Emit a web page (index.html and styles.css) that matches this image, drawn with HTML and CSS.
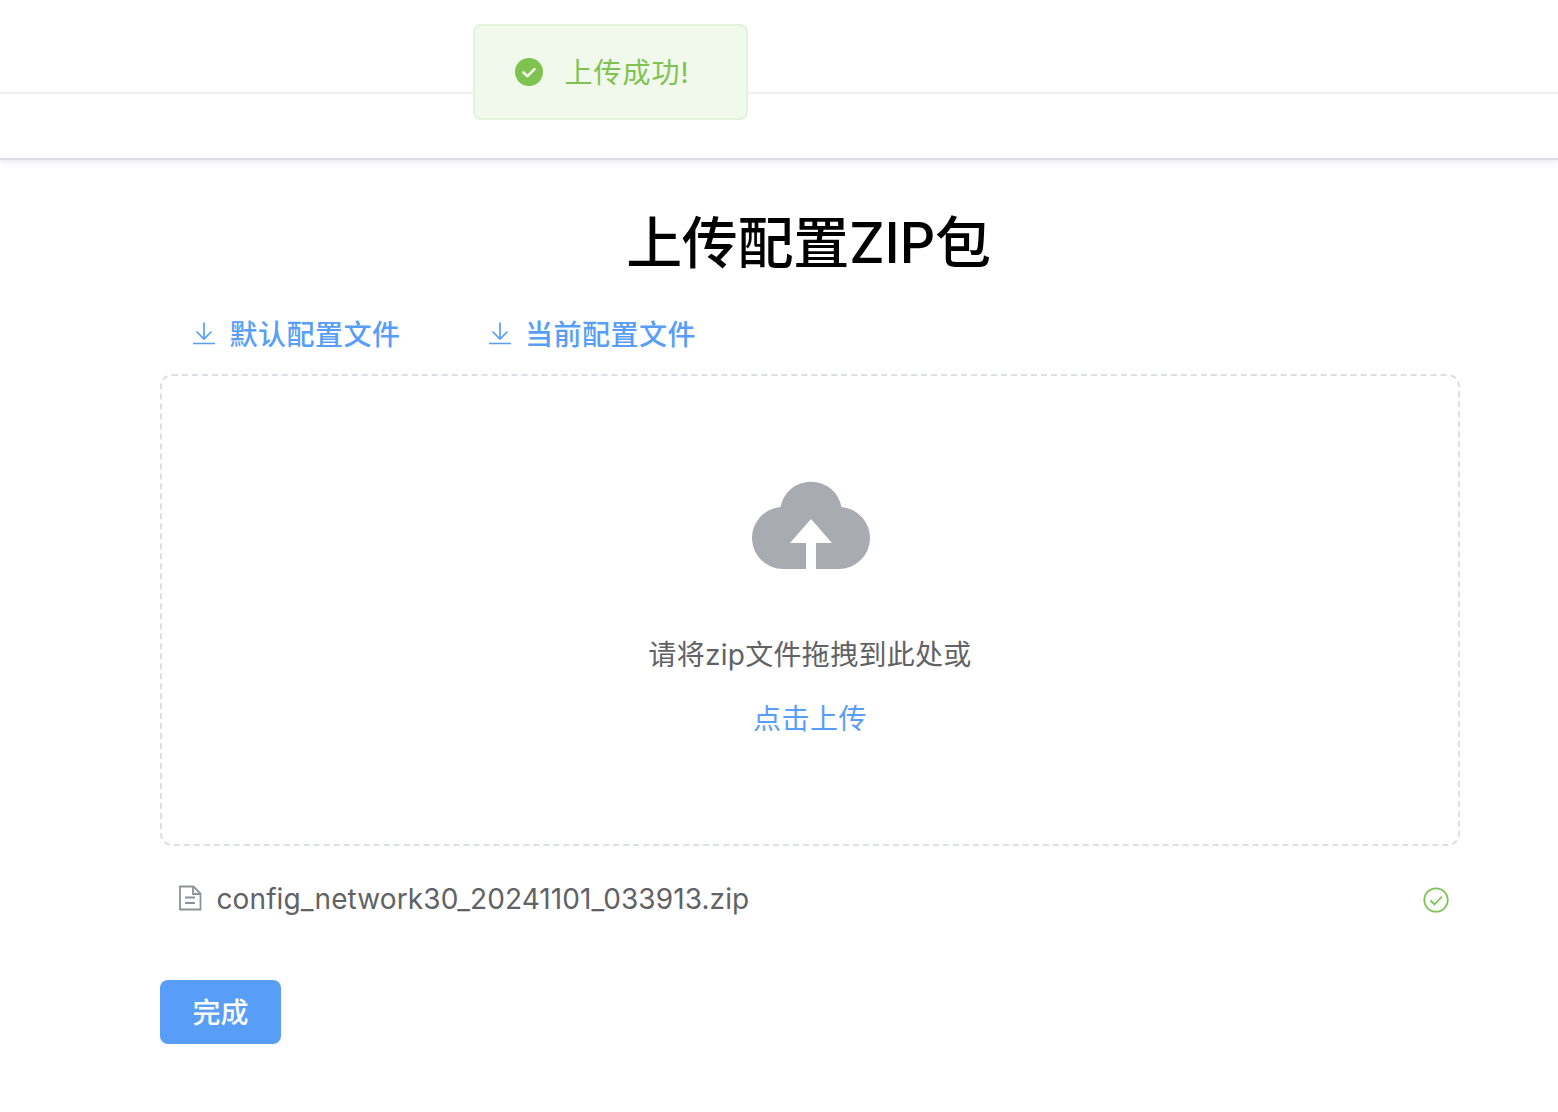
FILE: index.html
```html
<!DOCTYPE html>
<html lang="zh-CN">
<head>
<meta charset="utf-8">
<title>上传配置ZIP包</title>
<link rel="stylesheet" href="styles.css">
</head>
<body>
<div class="toast">
  <svg class="toast-icon" viewBox="0 0 30 30"><circle cx="15" cy="15" r="14" fill="#7fc250"/><path d="M9.5 15.5l4 3.7 7-7" fill="none" stroke="#f0f9eb" stroke-width="2.6" stroke-linecap="round" stroke-linejoin="round"/></svg>
  <span class="toast-text">上传成功!</span>
</div>
<header class="topbar"></header>
<div class="subbar"></div>
<main class="content">
  <h1 class="title">上传配置ZIP包</h1>
  <div class="links">
    <a class="link">
      <svg class="link-icon" viewBox="0 0 24 24"><path d="M1 22.500h22M12 1.500v16M4.500 10.500l7.500 7.500 7.500-7.500" fill="none" stroke="#589ef8" stroke-width="1.700"/></svg>
      <span class="link-text">默认配置文件</span>
    </a>
    <a class="link">
      <svg class="link-icon" viewBox="0 0 24 24"><path d="M1 22.500h22M12 1.500v16M4.500 10.500l7.500 7.500 7.500-7.500" fill="none" stroke="#589ef8" stroke-width="1.700"/></svg>
      <span class="link-text">当前配置文件</span>
    </a>
  </div>
  <section class="dropzone">
    <svg class="cloud" viewBox="0 0 118 90"><path d="M31 88A31 31 0 0 1 28.500 26.100A31 31 0 0 1 89.500 26.100A31 31 0 0 1 87 88H64V62H80L59 38L38 62H54V88Z" fill="#a8abb2"/></svg>
    <p class="hint">请将zip文件拖拽到此处或</p>
    <p class="click">点击上传</p>
  </section>
  <div class="file-row">
    <svg class="file-icon" viewBox="0 0 24 26"><path d="M2 1.500h13.500L22.500 8.500v16H2zM15 1.500v7.500h7.500M7 12.500h10M7 18h10" fill="none" stroke="#8f9299" stroke-width="1.800"/></svg>
    <span class="file-name">config_network30_20241101_033913.zip</span>
    <svg class="ok-icon" viewBox="0 0 26 26"><circle cx="13" cy="13" r="11.700" fill="none" stroke="#7fc250" stroke-width="1.800"/><path d="M7.500 13.500l4 4 7.500-8" fill="none" stroke="#7fc250" stroke-width="1.800"/></svg>
  </div>
  <button class="done" type="button">完成</button>
</main>
</body>
</html>
```
FILE: styles.css
```css
* { box-sizing: border-box; }
html, body { margin: 0; padding: 0; background: #fff; }
body {
  font-family: Inter, "Noto Sans CJK SC", sans-serif;
  width: 1558px;
  height: 1112px;
  overflow: hidden;
  position: relative;
}
.topbar {
  height: 94px;
  background: #fff;
  border-bottom: 2px solid #f3f3f5;
  box-shadow: 0 2px 5px rgba(0, 0, 0, .025);
}
.subbar {
  height: 66px;
  background: #fff;
  border-bottom: 2px solid #dcdce6;
  box-shadow: 0 2px 6px rgba(190, 190, 215, .35);
  position: relative;
}
.toast {
  position: absolute;
  left: 472.500px;
  top: 24px;
  width: 275px;
  height: 96px;
  background: #f0f9eb;
  border: 2px solid #e1f3d8;
  border-radius: 8px;
  display: flex;
  align-items: center;
  padding-left: 39px;
  gap: 21px;
  z-index: 2;
}
.toast-icon { width: 30px; height: 30px; flex: none; }
.toast-text {
  color: #7fc250;
  font-size: 28px;
  line-height: 1;
  letter-spacing: 1px;
  margin-top: 2px;
}
.content {
  width: 1300px;
  margin-left: 160px;
}
.title {
  margin: 49px 0 0;
  padding-right: 3px;
  font-size: 56px;
  line-height: 68px;
  font-weight: 500;
  text-align: center;
  letter-spacing: -.3px;
  color: #000;
}
.links {
  display: flex;
  gap: 87px;
  padding-left: 32px;
  margin-top: 36px;
  height: 61px;
}
.link {
  display: flex;
  align-items: center;
  gap: 13.500px;
  color: #589ef8;
  font-size: 28px;
  font-weight: 500;
  height: 40px;
}
.link-text { letter-spacing: .5px; }
.link-icon { width: 24px; height: 24px; flex: none; }
.dropzone {
  height: 472px;
  border: 2px dashed #dcdfe6;
  border-radius: 12px;
  display: flex;
  flex-direction: column;
  align-items: center;
  padding-top: 105px;
}
.cloud { width: 118px; height: 90px; margin-left: 2px; }
.hint {
  margin: 64px 0 0;
  color: #606266;
  font-size: 28px;
  line-height: 40px;
  letter-spacing: .3px;
}
.click {
  margin: 24px 0 0;
  color: #589ef8;
  font-size: 28px;
  line-height: 40px;
  letter-spacing: .5px;
}
.file-row {
  display: flex;
  align-items: center;
  height: 52px;
  margin-top: 26px;
  padding-left: 18px;
  padding-right: 11px;
}
.file-icon { width: 24px; height: 26px; flex: none; }
.file-name {
  margin-left: 14.500px;
  margin-top: 2px;
  color: #606266;
  font-size: 28px;
  line-height: 40px;
  letter-spacing: .1px;
}
.ok-icon { width: 26px; height: 26px; flex: none; margin-left: auto; margin-top: 4px; }
.done {
  display: block;
  margin-top: 56px;
  padding: 0 0 2px;
  width: 121px;
  height: 64px;
  background: #589ef8;
  border: 0;
  border-radius: 8px;
  color: #fff;
  font-family: inherit;
  font-size: 28px;
  font-weight: 500;
}
```
